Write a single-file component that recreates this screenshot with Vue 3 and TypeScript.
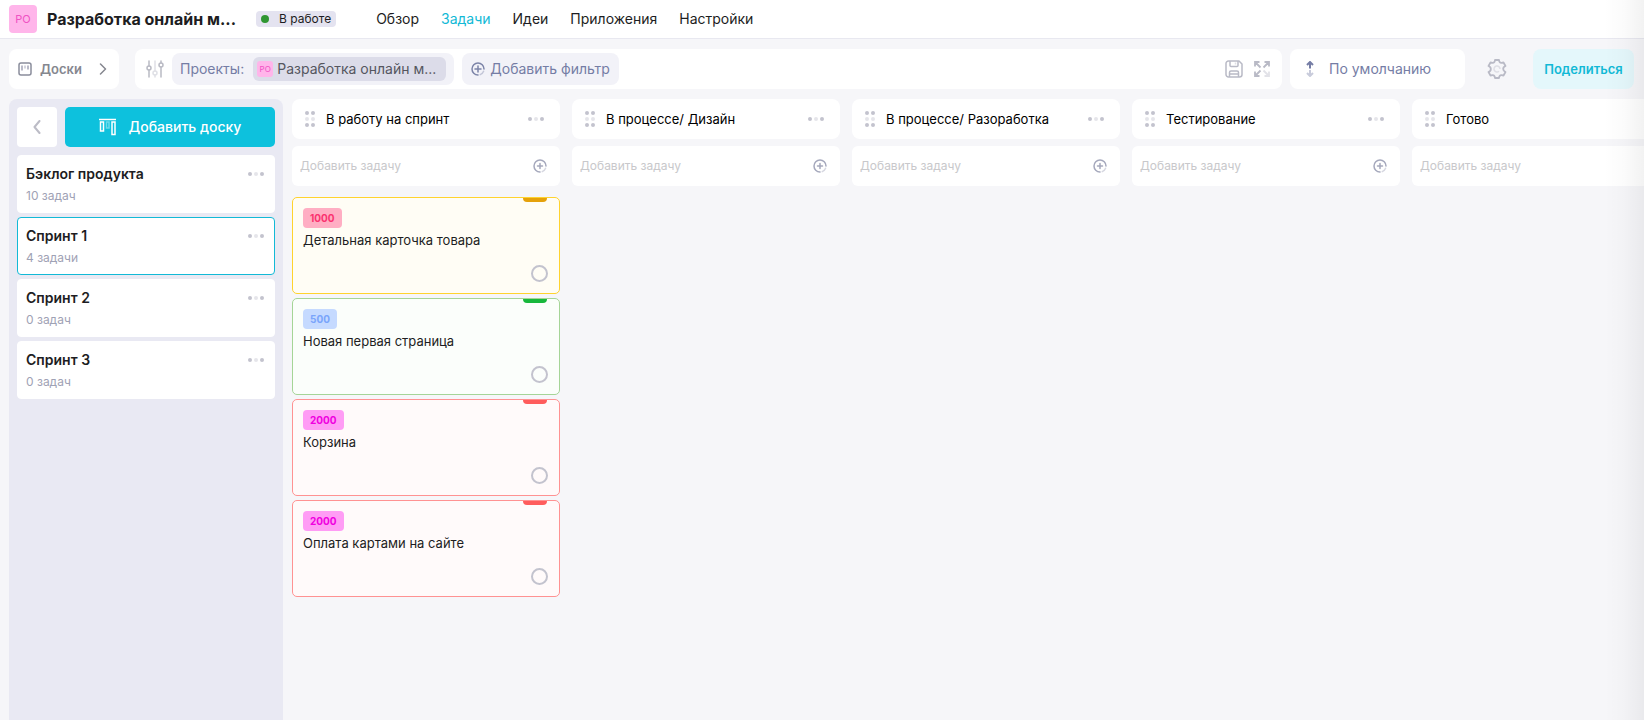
<script setup lang="ts">
import { ref } from 'vue'

interface Board {
  name: string
  count: string
}
interface Task {
  title: string
  badge: string
  badgeTone: 'rose' | 'blue' | 'magenta'
  priority: 'yellow' | 'green' | 'red'
}
interface Column {
  title: string
  tasks: Task[]
}

const nav: string[] = ['Обзор', 'Задачи', 'Идеи', 'Приложения', 'Настройки']
const activeNav = ref('Задачи')

const boards: Board[] = [
  { name: 'Бэклог продукта', count: '10 задач' },
  { name: 'Спринт 1', count: '4 задачи' },
  { name: 'Спринт 2', count: '0 задач' },
  { name: 'Спринт 3', count: '0 задач' },
]
const activeBoard = ref('Спринт 1')

const columns: Column[] = [
  {
    title: 'В работу на спринт',
    tasks: [
      { title: 'Детальная карточка товара', badge: '1000', badgeTone: 'rose', priority: 'yellow' },
      { title: 'Новая первая страница', badge: '500', badgeTone: 'blue', priority: 'green' },
      { title: 'Корзина', badge: '2000', badgeTone: 'magenta', priority: 'red' },
      { title: 'Оплата картами на сайте', badge: '2000', badgeTone: 'magenta', priority: 'red' },
    ],
  },
  { title: 'В процессе/ Дизайн', tasks: [] },
  { title: 'В процессе/ Разоработка', tasks: [] },
  { title: 'Тестирование', tasks: [] },
  { title: 'Готово', tasks: [] },
]
</script>

<template>
  <div class="page">
    <header class="header">
      <span class="logo">PO</span>
      <h1 class="project">Разработка онлайн м...</h1>
      <span class="status"><i class="status-dot"></i>В работе</span>
      <nav class="nav">
        <a
          v-for="item in nav"
          :key="item"
          href="#"
          :class="{ active: item === activeNav }"
          @click.prevent="activeNav = item"
        >{{ item }}</a>
      </nav>
    </header>

    <div class="toolbar">
      <button class="boards-button" type="button">
        <svg width="14" height="14" viewBox="0 0 14 14" fill="none">
          <rect x="1" y="1" width="12" height="12" rx="2" stroke="#8a8d9c" stroke-width="1.5" />
          <path d="M4 3.500v5M10 3.500v4" stroke="#b9bac8" stroke-width="2" />
          <path d="M7 3.500v3" stroke="#d4d5de" stroke-width="2" />
        </svg>
        <span>Доски</span>
        <svg class="push" width="8" height="12" viewBox="0 0 8 12" fill="none">
          <path d="M1.500 1 6.500 6l-5 5" stroke="#85878f" stroke-width="1.500" stroke-linecap="round" stroke-linejoin="round" />
        </svg>
      </button>

      <div class="filters">
        <button class="icon-button" type="button" aria-label="Фильтры">
          <svg width="18" height="18" viewBox="0 0 18 18" fill="none" stroke-width="1.500" stroke-linecap="round">
            <g stroke="#b9bac4"><path d="M3 1v5M3 10v7M15 1v2M15 7v10" /><circle cx="3" cy="8" r="2" /><circle cx="15" cy="5" r="2" /></g>
            <g stroke="#dfe0e6"><path d="M9 1v10M9 15v2" /><circle cx="9" cy="13" r="2" /></g>
          </svg>
        </button>
        <div class="filter">
          <span>Проекты:</span>
          <button class="filter-value" type="button"><span class="mini-logo">PO</span>Разработка онлайн м...</button>
        </div>
        <button class="filter add-filter" type="button">
          <svg width="14" height="14" viewBox="0 0 14 14" fill="none" stroke-width="1.500" stroke-linecap="round">
            <path d="M7 13A6 6 0 1 1 13 7M7 4v6M4 7h6" stroke="#7c84a8" />
            <path d="M12.600 9.200A6 6 0 0 1 9.200 12.600" stroke="#c3c6d8" />
          </svg>
          Добавить фильтр
        </button>
        <div class="filter-tools">
          <button class="icon-button" type="button" aria-label="Сохранить">
            <svg width="18" height="18" viewBox="0 0 18 18" fill="none" stroke="#b9bac6" stroke-width="1.500" stroke-linejoin="round">
              <path d="M3.500 1h10.500L17 4v10.500a2.500 2.500 0 0 1-2.500 2.500h-11A2.500 2.500 0 0 1 1 14.500v-11A2.500 2.500 0 0 1 3.500 1z" />
              <path d="M5 1v4.500a1 1 0 0 0 1 1h6a1 1 0 0 0 1-1V1M4.500 17v-4.500a1.500 1.500 0 0 1 1.500-1.500h6a1.500 1.500 0 0 1 1.500 1.500V17M5 14h8" />
              <path d="M10.500 2.500v2" stroke="#dedee5" />
            </svg>
          </button>
          <button class="icon-button" type="button" aria-label="На весь экран">
            <svg width="16" height="16" viewBox="0 0 16 16" fill="none" stroke="#b9bac6" stroke-width="1.800">
              <path d="M6.500 6.500 1 1M1 5.500V1h4.500M9.500 6.500 15 1M10.500 1H15v4.500M6.500 9.500 1 15M1 10.500V15h4.500" />
              <path d="M9.500 9.500 15 15M15 10.500V15h-4.500" stroke="#e2e2e8" />
            </svg>
          </button>
        </div>
      </div>

      <button class="sort" type="button">
        <svg width="8" height="16" viewBox="0 0 8 16" fill="none" stroke-width="2">
          <path d="M4 7.500V1.500M1 4l3-3 3 3" stroke="#757da5" />
          <path d="M4 9v5.500M1 12l3 3 3-3" stroke="#c8cbdb" />
        </svg>
        По умолчанию
      </button>

      <button class="icon-button gear" type="button" aria-label="Параметры">
        <svg width="20" height="20" viewBox="0 0 20 20" fill="none" stroke-linejoin="round">
          <path d="M8 1h4q.2 3 2.500 2.800l2-.3 2 3.500Q16 8 16.200 10q0 2 2.300 3l-2 3.500-2-.3Q12.200 16 12 19H8q-.2-3-2.500-2.800l-2 .3-2-3.500Q4 12 3.800 10 4 8 1.500 7l2-3.500 2 .3Q7.800 4 8 1z" stroke="#b9bac6" stroke-width="1.800" />
          <path d="M12 12.200a3 3 0 1 1 1-2.200" stroke="#dedee5" stroke-width="1.500" />
        </svg>
      </button>

      <button class="share" type="button">Поделиться</button>
    </div>

    <main class="workspace">
      <aside class="sidebar">
        <div class="sidebar-head">
          <button class="back" type="button" aria-label="Свернуть">
            <svg width="8" height="14" viewBox="0 0 8 14" fill="none">
              <path d="M6.500 1 1.500 7l5 6" stroke="#bcbcc6" stroke-width="2" stroke-linecap="round" stroke-linejoin="round" />
            </svg>
          </button>
          <button class="add-board" type="button">
            <svg width="18" height="18" viewBox="0 0 18 18" fill="none" stroke="#fff" stroke-width="1.500">
              <path d="M0 1.500h17" />
              <path d="M1.500 4h3v9h-3zM13 4h3v12.500h-3z" />
              <path d="M7.500 4h2.500v6H7.500z" opacity=".4" />
            </svg>
            Добавить доску
          </button>
        </div>
        <section
          v-for="board in boards"
          :key="board.name"
          class="board"
          :class="{ selected: board.name === activeBoard }"
          @click="activeBoard = board.name"
        >
          <div>
            <h2>{{ board.name }}</h2>
            <p>{{ board.count }}</p>
          </div>
          <button class="dots" type="button" aria-label="Меню доски"><i></i><i></i><i></i></button>
        </section>
      </aside>

      <div class="columns">
        <section v-for="(column, index) in columns" :key="column.title" class="column">
          <div class="column-head">
            <span class="grip"><i v-for="n in 6" :key="n"></i></span>
            <h2>{{ column.title }}</h2>
            <button class="dots" type="button" aria-label="Меню колонки"><i></i><i></i><i></i></button>
          </div>
          <div class="add-task">
            <input :id="`task-${index}`" type="text" placeholder="Добавить задачу" aria-label="Добавить задачу" />
            <button class="icon-button" type="button" aria-label="Добавить">
              <svg width="14" height="14" viewBox="0 0 14 14" fill="none" stroke-width="1.500" stroke-linecap="round">
                <path d="M7 13A6 6 0 1 1 13 7M7 4.500v5M4.500 7h5" stroke="#a5a8bc" />
                <path d="M12.600 9.200A6 6 0 0 1 9.200 12.600" stroke="#d6d7e0" />
              </svg>
            </button>
          </div>
          <div v-if="column.tasks.length" class="tasks">
            <article v-for="task in column.tasks" :key="task.title" class="task" :class="task.priority">
              <span class="badge" :class="task.badgeTone">{{ task.badge }}</span>
              <h3>{{ task.title }}</h3>
              <input type="checkbox" class="done" :aria-label="task.title" />
            </article>
          </div>
        </section>
      </div>
    </main>
    <div class="edge-shade"></div>
  </div>
</template>

<style>
body {
  margin: 0;
  background: #f6f6f9;
}
</style>

<style scoped>
* {
  box-sizing: border-box;
}
.page {
  position: relative;
  display: flex;
  flex-direction: column;
  min-height: 100vh;
  overflow: hidden;
  font-family: Inter, "Liberation Sans", sans-serif;
  font-size: 14px;
  line-height: 20px;
  color: #1d1d22;
}
h1, h2, h3, p {
  margin: 0;
}
svg {
  display: block;
  flex: none;
}
button {
  font: inherit;
  color: inherit;
  border: 0;
  padding: 0;
  background: none;
  cursor: pointer;
  white-space: nowrap;
}
.header {
  display: flex;
  align-items: center;
  height: 39px;
  padding: 0 10px 1px 9px;
  background: #fff;
  border-bottom: 1px solid #e8e8f0;
}
.logo {
  display: grid;
  place-items: center;
  width: 28px;
  height: 28px;
  border-radius: 4px;
  background: #ffb5ea;
  color: #f052c4;
  font-size: 11px;
}
.project {
  margin-left: 10px;
  font-size: 16px;
  font-weight: 700;
}
.status {
  display: flex;
  align-items: center;
  height: 16px;
  margin-left: 20px;
  padding: 0 5px;
  gap: 10px;
  border-radius: 4px;
  background: #e4e3f0;
  font-size: 12px;
}
.status-dot {
  width: 8px;
  height: 8px;
  border-radius: 50%;
  background: #2f9632;
}
.nav {
  display: flex;
  gap: 22px;
  margin-left: 40px;
}
.nav a {
  color: #1d1d22;
  text-decoration: none;
}
.nav a.active {
  color: #12b9d6;
}
.toolbar {
  display: flex;
  height: 40px;
  margin: 10px 10px 0 9px;
}
.boards-button {
  display: flex;
  align-items: center;
  width: 110px;
  padding: 0 12px 0 9px;
  gap: 8px;
  border-radius: 8px;
  background: #fff;
  color: #85878f;
  font-size: 13px;
  font-weight: 600;
}
.push {
  margin-left: auto;
}
.filters {
  display: flex;
  flex: 1;
  align-items: center;
  margin-left: 16px;
  padding: 0 12px 0 11px;
  gap: 8px;
  border-radius: 8px;
  background: #fff;
}
.filter {
  display: flex;
  align-items: center;
  height: 32px;
  padding: 0 8px;
  gap: 9px;
  border-radius: 8px;
  background: #f2f2f8;
  color: #757da5;
}
.filter-value {
  display: flex;
  align-items: center;
  height: 24px;
  padding: 0 10px 0 4px;
  gap: 4px;
  border-radius: 6px;
  background: #dcdce9;
  color: #55565f;
}
.mini-logo {
  display: grid;
  place-items: center;
  width: 16px;
  height: 16px;
  border-radius: 3px;
  background: #ffb5ea;
  color: #f052c4;
  font-size: 8px;
  line-height: 16px;
}
.add-filter {
  padding: 0 9px;
  gap: 5px;
}
.filter-tools {
  display: flex;
  align-items: center;
  gap: 11px;
  margin-left: auto;
}
.sort {
  display: flex;
  align-items: center;
  width: 175px;
  margin-left: 8px;
  padding: 0 16px;
  gap: 15px;
  border-radius: 8px;
  background: #fff;
  color: #757da5;
}
.gear {
  margin: 0 26px 0 22px;
}
.share {
  width: 101px;
  border-radius: 8px;
  background: #e4f7fb;
  color: #12b9d6;
  font-size: 13px;
  font-weight: 600;
}
.workspace {
  display: flex;
  flex: 1;
  margin-top: 10px;
  gap: 9px;
  padding-left: 9px;
}
.sidebar {
  display: flex;
  flex: none;
  flex-direction: column;
  width: 274px;
  padding: 8px;
  gap: 4px;
  border-radius: 8px 8px 0 0;
  background: #e9e9f3;
}
.sidebar-head {
  display: flex;
  gap: 8px;
  margin-bottom: 4px;
}
.back {
  display: grid;
  place-items: center;
  width: 40px;
  height: 40px;
  border-radius: 4px;
  background: #fff;
}
.add-board {
  display: flex;
  flex: 1;
  align-items: center;
  justify-content: center;
  gap: 12px;
  border-radius: 5px;
  background: #0dc1dd;
  color: #fff;
  font-weight: 500;
}
.board {
  display: flex;
  align-items: flex-start;
  justify-content: space-between;
  height: 58px;
  padding: 8px 10px 0 8px;
  border: 1px solid #fff;
  border-radius: 4px;
  background: #fff;
  cursor: pointer;
}
.board.selected {
  border-color: #12b9d6;
}
.board h2 {
  font-size: 14px;
  font-weight: 600;
}
.board p {
  margin-top: 2px;
  font-size: 12px;
  color: #9fa2b5;
}
.dots {
  display: flex;
  align-items: center;
  height: 20px;
  gap: 2px;
}
.dots i,
.grip i {
  width: 4px;
  height: 4px;
  border-radius: 50%;
  background: #c3c3ce;
}
.dots i:nth-child(2),
.grip i:nth-child(3),
.grip i:nth-child(4) {
  background: #e5e5ea;
}
.columns {
  display: flex;
  flex: 1;
  gap: 12px;
  min-width: 0;
  overflow: hidden;
}
.column {
  flex: none;
  width: 268px;
}
.column-head {
  display: flex;
  align-items: center;
  height: 40px;
  padding: 0 16px 0 13px;
  border-radius: 8px;
  background: #fff;
}
.column-head h2 {
  flex: 1;
  margin-left: 11px;
  font-size: 13px;
  font-weight: 400;
  color: #000;
}
.grip {
  display: grid;
  grid-template-columns: 4px 4px;
  gap: 2px;
}
.add-task {
  display: flex;
  align-items: center;
  height: 40px;
  margin-top: 7px;
  padding: 0 13px 0 8px;
  border-radius: 6px;
  background: #fff;
}
.add-task input {
  flex: 1;
  min-width: 0;
  padding: 0;
  border: 0;
  outline: 0;
  background: none;
  font: inherit;
  font-size: 12px;
}
.add-task input::placeholder {
  color: #c8c8cb;
  opacity: 1;
}
.tasks {
  display: flex;
  flex-direction: column;
  gap: 4px;
  margin-top: 11px;
}
.task {
  position: relative;
  display: flex;
  flex-direction: column;
  align-items: flex-start;
  height: 97px;
  padding: 10px 11px 11px 10px;
  border: 1px solid;
  border-radius: 5px;
}
.task::before {
  content: "";
  position: absolute;
  top: 0;
  right: 12px;
  width: 24px;
  height: 4px;
  border-radius: 0 0 4px 4px;
}
.task.yellow {
  border-color: #ffd32e;
  background: #fffdf5;
}
.task.yellow::before {
  background: #e5a10b;
}
.task.green {
  border-color: #a5d597;
  background: #fbfefb;
}
.task.green::before {
  background: #17b83c;
}
.task.red {
  border-color: #ff9292;
  background: #fffafa;
}
.task.red::before {
  background: #ff5c5c;
}
.badge {
  height: 20px;
  padding: 0 7px;
  border-radius: 4px;
  font-size: 10px;
  font-weight: 700;
}
.badge.rose {
  background: #ffaec3;
  color: #fb3370;
}
.badge.blue {
  background: #c5daff;
  color: #7aa5fb;
}
.badge.magenta {
  background: #ff9cf5;
  color: #f000e0;
}
.task h3 {
  margin-top: 2px;
  font-size: 13px;
  font-weight: 400;
}
.done {
  appearance: none;
  align-self: flex-end;
  width: 17px;
  height: 17px;
  margin: auto 0 0;
  border: 2px solid #c3c3ce;
  border-radius: 50%;
}
.edge-shade {
  position: absolute;
  top: 0;
  right: 0;
  bottom: 0;
  width: 40px;
  background: linear-gradient(to right, rgba(0, 0, 0, 0), rgba(0, 0, 0, 0.015) 50%, rgba(0, 0, 0, 0.05));
  pointer-events: none;
}
</style>
